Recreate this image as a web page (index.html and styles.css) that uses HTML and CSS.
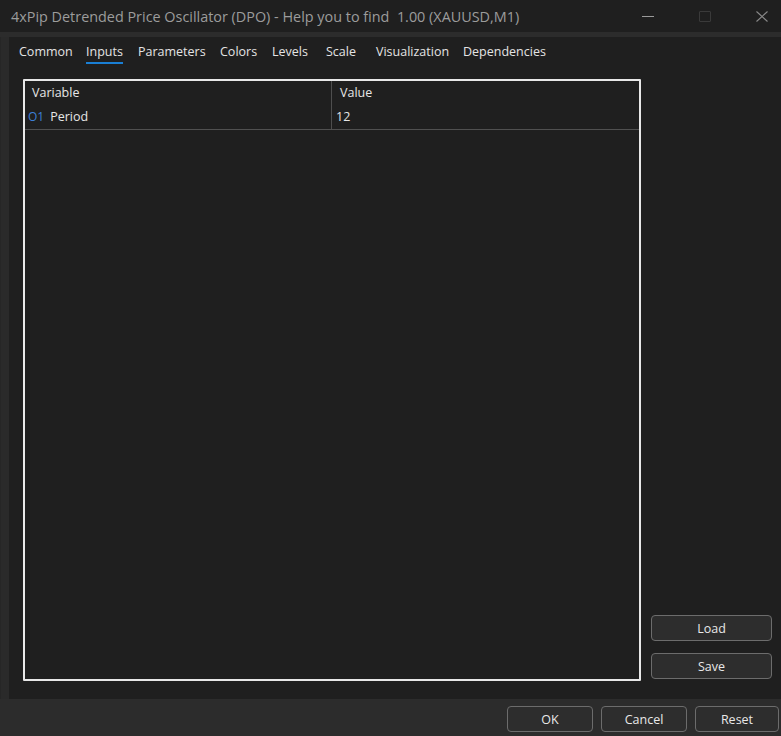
FILE: index.html
```html
<!DOCTYPE html>
<html lang="en">
<head>
    <meta charset="UTF-8">
    <title>Indicator properties</title>
    <link rel="stylesheet" href="styles.css">
</head>
<body>
    <div class="titlebar">
        <span class="title">4xPip Detrended Price Oscillator (DPO) - Help you to find&nbsp; 1.00 (XAUUSD,M1)</span>
        <div class="win-controls">
            <span class="wc wc-min"></span>
            <span class="wc wc-max"></span>
            <span class="wc wc-close">
                <svg width="12" height="11" viewBox="0 0 12 11"><path d="M0.5 0.5L11.5 10.5M11.5 0.5L0.5 10.5" stroke="#8a8a8a" stroke-width="1.1" fill="none"/></svg>
            </span>
        </div>
    </div>
    <div class="frame">
        <div class="left-strip"></div>
        <div class="panel">
            <nav class="tabs">
                <a>Common</a>
                <a class="active">Inputs</a>
                <a>Parameters</a>
                <a>Colors</a>
                <a>Levels</a>
                <a>Scale</a>
                <a>Visualization</a>
                <a>Dependencies</a>
            </nav>
            <div class="content">
                <div class="grid-box">
                    <div class="row head">
                        <div class="cell c-var">Variable</div>
                        <div class="cell c-val">Value</div>
                    </div>
                    <div class="row item">
                        <div class="cell c-var"><span class="ico">O1</span>Period</div>
                        <div class="cell c-val">12</div>
                    </div>
                </div>
                <div class="side">
                    <button class="btn">Load</button>
                    <button class="btn">Save</button>
                </div>
            </div>
        </div>
    </div>
    <div class="footer">
        <button class="btn fbtn">OK</button>
        <button class="btn fbtn">Cancel</button>
        <button class="btn fbtn">Reset</button>
    </div>
</body>
</html>
```

FILE: styles.css
```css
body {
    margin: 0;
    width: 781px;
    height: 736px;
    overflow: hidden;
    background: #2c2c2c;
    font-family: 'Open Sans', 'Noto Sans', Arial, sans-serif;
    color: #e6e6e6;
    font-size: 12.5px;
    display: flex;
    flex-direction: column;
}
.titlebar {
    height: 32px;
    background: #1f1f1f;
    display: flex;
    align-items: center;
    justify-content: space-between;
    padding-left: 11px;
}
.title {
    color: #9c9c9c;
    font-size: 14.4px;
    white-space: nowrap;
}
.win-controls {
    display: flex;
    align-items: center;
    gap: 45px;
    padding-right: 13px;
}
.wc {
    width: 12px;
    height: 11px;
    display: flex;
    align-items: center;
    justify-content: center;
}
.wc-min::before {
    content: '';
    width: 12px;
    height: 1px;
    background: #9a9a9a;
}
.wc-max {
    box-sizing: border-box;
    border: 1px solid #3a3a3a;
    border-radius: 1px;
}
.frame {
    display: flex;
    padding-top: 5px;
    height: 662px;
}
.left-strip {
    width: 9px;
    box-sizing: border-box;
    border-left: 1px solid #262626;
    background: #2a2a2a;
}
.panel {
    flex: 1;
    background: #1f1f1f;
    display: flex;
    flex-direction: column;
}
.tabs {
    display: grid;
    grid-template-columns: 67px 52px 82px 52px 54px 50px 87px auto;
    padding: 5px 0 0 10px;
    height: 24px;
}
.tabs a {
    justify-self: start;
    line-height: 19px;
    height: 22px;
    color: #e4e4e4;
    box-sizing: border-box;
}
.tabs a.active {
    border-bottom: 2.5px solid #1a7fd4;
}
.content {
    display: flex;
    padding: 13px 0 0 14px;
}
.grid-box {
    width: 618px;
    height: 602px;
    border: 2px solid #e8e8e8;
    border-radius: 1px;
    background: #1f1f1f;
    box-sizing: border-box;
}
.row {
    display: flex;
    height: 24px;
    line-height: 24px;
}
.row.item {
    border-bottom: 1px solid #505050;
}
.cell {
    white-space: nowrap;
    box-sizing: border-box;
}
.c-var {
    width: 307px;
    padding-left: 7px;
    border-right: 1px solid #4e4e4e;
}
.c-val { padding-left: 8px; }
.row.item .c-val { padding-left: 4px; }
.row.item .c-var { padding-left: 3px; }
.ico {
    color: #3d7fd6;
    font-size: 12px;
    margin-right: 6px;
}
.side {
    display: flex;
    flex-direction: column;
    justify-content: flex-end;
    gap: 12px;
    margin-left: 10px;
    padding-bottom: 2px;
}
.btn {
    font-family: inherit;
    font-size: 12.5px;
    color: #e8e8e8;
    background: #2d2d2d;
    border: 1px solid #6c6c6c;
    border-radius: 4px;
    width: 121px;
    height: 26px;
    padding: 0;
}
.footer {
    flex: 1;
    display: flex;
    justify-content: flex-end;
    align-items: flex-start;
    gap: 8px;
    padding: 7px 2px 0 0;
    background: #2c2c2c;
}
.fbtn {
    width: 86px;
}
.fbtn:last-child { width: 84px; }
```
